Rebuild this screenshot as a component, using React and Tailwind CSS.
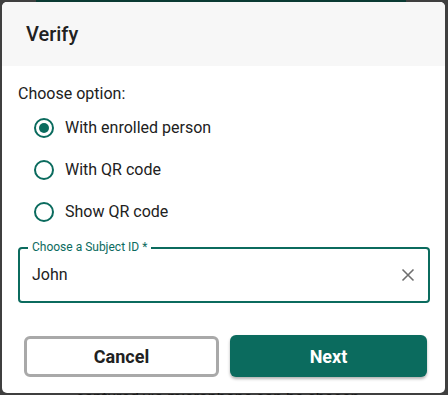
import { useState } from "react";

const teal = "#0b6b5e";

export default function App() {
  const [option, setOption] = useState("enrolled");
  const [subject, setSubject] = useState("John");

  return (
    <div
      className="relative w-[448px] h-[395px] overflow-hidden bg-[#3f3f3f]"
      style={{ fontFamily: "Roboto, 'Liberation Sans', sans-serif" }}
    >
      {/* page behind the modal */}
      <div className="absolute top-0 left-[36px] w-[370px] h-[4px] bg-[#0a3a33]" />
      <div className="absolute top-[386px] left-[76px] text-[16px] text-[#1a1a1a] whitespace-nowrap">
        captured via microphone can be chosen
      </div>

      {/* Dialog */}
      <div className="absolute left-[2px] top-[2px] w-[443px] h-[391px] bg-white rounded-[5px] overflow-hidden flex flex-col">
        <div className="h-[64px] bg-[#f7f7f7] flex items-center px-[24px]">
          <h2 className="text-[20px] font-medium text-[#212121]">Verify</h2>
        </div>

        <div className="flex flex-col px-[16px] pt-[18px]">
          <p className="text-[16px] text-[#212121] leading-[20px]">Choose option:</p>

          <div className="flex flex-col mt-[8px] pl-[16px] gap-[10px]">
            <RadioRow
              label="With enrolled person"
              checked={option === "enrolled"}
              onClick={() => setOption("enrolled")}
            />
            <RadioRow
              label="With QR code"
              checked={option === "qr"}
              onClick={() => setOption("qr")}
            />
            <RadioRow
              label="Show QR code"
              checked={option === "show"}
              onClick={() => setOption("show")}
            />
          </div>

          {/* Outlined text field */}
          <div className="relative mt-[19px] w-[412px] h-[56px] border-2 border-[#0b6b5e] rounded-[4px] pl-[12px] pr-[8px] flex items-center">
            <span className="absolute -top-[9px] left-[8px] bg-white px-[4px] text-[12px] text-[#0b6b5e] leading-[14px]">
              Choose a Subject ID *
            </span>
            <input
              value={subject}
              onChange={(e) => setSubject(e.target.value)}
              className="flex-1 bg-transparent text-[16px] text-[#212121] outline-none"
              style={{ fontFamily: "inherit" }}
            />
            <button
              onClick={() => setSubject("")}
              className="w-[24px] h-[24px] flex items-center justify-center"
            >
              <svg width="14" height="14" viewBox="0 0 14 14">
                <path d="M1.5 1.5 L12.5 12.5 M12.5 1.5 L1.5 12.5" stroke="#6f6f6f" strokeWidth="1.6" />
              </svg>
            </button>
          </div>

          <div className="flex gap-[11px] mt-[33px] pl-[6px]">
            <button className="w-[195px] h-[41px] rounded-[6px] border-[3px] border-[#a9a9a9] text-[18px] font-bold text-[#212121] bg-white">
              Cancel
            </button>
            <button
              className="w-[197px] h-[42px] -mt-[1px] rounded-[6px] text-[18px] font-bold text-white shadow-[0_2px_3px_rgba(0,0,0,0.3)]"
              style={{ backgroundColor: teal }}
            >
              Next
            </button>
          </div>
        </div>
      </div>
    </div>
  );
}

const RadioRow = ({ label, checked, onClick }) => (
  <button onClick={onClick} className="flex items-center gap-[11px] h-[32px] text-left">
    <span className="w-[20px] h-[20px] rounded-full border-2 border-[#0b6b5e] flex items-center justify-center">
      {checked && <span className="w-[10px] h-[10px] rounded-full bg-[#0b6b5e]" />}
    </span>
    <span className="text-[16px] text-[#212121]">{label}</span>
  </button>
);
